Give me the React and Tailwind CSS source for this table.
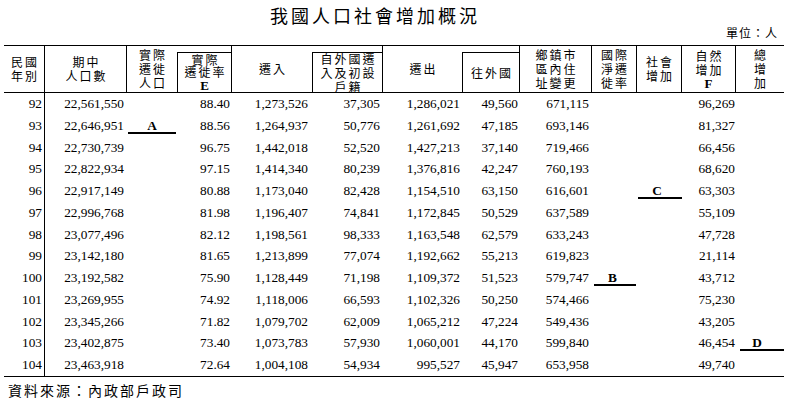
const cjk = "font-['Noto_Sans_CJK_TC','Noto_Sans_CJK_SC',sans-serif]"
const serif = "font-['Liberation_Serif','Times_New_Roman',serif]"

const rows = [
  ['92', '22,561,550', '', '88.40', '1,273,526', '37,305', '1,286,021', '49,560', '671,115', '', '', '96,269', ''],
  ['93', '22,646,951', 'A', '88.56', '1,264,937', '50,776', '1,261,692', '47,185', '693,146', '', '', '81,327', ''],
  ['94', '22,730,739', '', '96.75', '1,442,018', '52,520', '1,427,213', '37,140', '719,466', '', '', '66,456', ''],
  ['95', '22,822,934', '', '97.15', '1,414,340', '80,239', '1,376,816', '42,247', '760,193', '', '', '68,620', ''],
  ['96', '22,917,149', '', '80.88', '1,173,040', '82,428', '1,154,510', '63,150', '616,601', '', 'C', '63,303', ''],
  ['97', '22,996,768', '', '81.98', '1,196,407', '74,841', '1,172,845', '50,529', '637,589', '', '', '55,109', ''],
  ['98', '23,077,496', '', '82.12', '1,198,561', '98,333', '1,163,548', '62,579', '633,243', '', '', '47,728', ''],
  ['99', '23,142,180', '', '81.65', '1,213,899', '77,074', '1,192,662', '55,213', '619,823', '', '', '21,114', ''],
  ['100', '23,192,582', '', '75.90', '1,128,449', '71,198', '1,109,372', '51,523', '579,747', 'B', '', '43,712', ''],
  ['101', '23,269,955', '', '74.92', '1,118,006', '66,593', '1,102,326', '50,250', '574,466', '', '', '75,230', ''],
  ['102', '23,345,266', '', '71.82', '1,079,702', '62,009', '1,065,212', '47,224', '549,436', '', '', '43,205', ''],
  ['103', '23,402,875', '', '73.40', '1,073,783', '57,930', '1,060,001', '44,170', '599,840', '', '', '46,454', 'D'],
  ['104', '23,463,918', '', '72.64', '1,004,108', '54,934', '995,527', '45,947', '653,958', '', '', '49,740', ''],
]

// widths follow the ruled columns of the printed table
const bodyCols = [
  'w-[41px] pr-[2px] text-right border-r border-black',
  'w-[82px] pr-[3px] text-right',
  'w-[50px]',
  'w-[55px] pr-[2px] text-right',
  'w-[80px] pr-[4px] text-right',
  'w-[71px] pr-[3px] text-right',
  'w-[79px] pr-[2px] text-right',
  'w-[58px] pr-[2px] text-right',
  'w-[72px] pr-[3px] text-right',
  'w-[45px]',
  'w-[45px]',
  'w-[54px] pr-[1px] text-right',
  'w-[48px]',
]

// blanks to fill in: letter sits on a rule across the cell
const marks = {
  A: 'ml-[1px] mr-[1px]',
  B: 'ml-[2px] mr-[1px] pr-[5px]',
  C: 'ml-[1px] pr-[6px]',
  D: 'ml-[4px] pr-[10px]',
}

function Lines({ lines, letter, tight }) {
  return (
    <div className="flex flex-col items-center">
      {lines.map(l => (
        <span key={l} className={`pl-[2px] tracking-[2px] ${tight ? 'leading-[12.5px]' : 'leading-[14px]'}`}>{l}</span>
      ))}
      {letter && <span className={`${serif} text-[13px] font-bold leading-[13px]`}>{letter}</span>}
    </div>
  )
}

function HeadCell({ w, border, lines, letter }) {
  return (
    <div className={`${w} h-full flex items-center justify-center ${border ? 'border-r border-black' : ''}`}>
      <Lines lines={lines} letter={letter} />
    </div>
  )
}

function BoxCell({ w, lines, letter }) {
  return (
    <div className={`${w} h-full pt-[6px] border-r border-black`}>
      <div className="h-full flex items-center justify-center border-t border-l border-black">
        <Lines lines={lines} letter={letter} tight={!!letter} />
      </div>
    </div>
  )
}

export default function App() {
  return (
    <div className="w-[788px] h-[411px] bg-white text-black overflow-hidden">
      <div className={`${cjk} pr-[38px] pt-[4px] h-[26px] text-center text-[18px] tracking-[3px] leading-[22px]`}>
        我國人口社會增加概況
      </div>
      <div className={`${cjk} pr-[10px] h-[14px] text-right text-[12px] tracking-[1px] leading-[14px] mb-[5px]`}>
        單位：人
      </div>

      <div className="ml-[4px] w-[780px] border-t border-b border-black">
        <div className={`${cjk} flex h-[47px] text-[12px] border-b border-black`}>
          <HeadCell w="w-[41px]" border lines={['民國', '年別']} />
          <HeadCell w="w-[82px]" border lines={['期中', '人口數']} />
          <HeadCell w="w-[50px]" lines={['實際', '遷徙', '人口']} />
          <BoxCell w="w-[55px]" lines={['實際', '遷徙率']} letter="E" />
          <HeadCell w="w-[80px]" lines={['遷入']} />
          <BoxCell w="w-[71px]" lines={['自外國遷', '入及初設', '戶籍']} />
          <HeadCell w="w-[79px]" lines={['遷出']} />
          <BoxCell w="w-[58px]" lines={['往外國']} />
          <HeadCell w="w-[72px]" border lines={['鄉鎮市', '區內住', '址變更']} />
          <HeadCell w="w-[45px]" border lines={['國際', '淨遷', '徙率']} />
          <HeadCell w="w-[45px]" border lines={['社會', '增加']} />
          <HeadCell w="w-[54px]" border lines={['自然', '增加']} letter="F" />
          <HeadCell w="w-[48px]" lines={['總', '增', '加']} />
        </div>

        <div className={`${serif} text-[13.3px]`}>
          {rows.map(r => (
            <div key={r[0]} className="flex h-[21.75px]">
              {r.map((v, i) =>
                marks[v] ? (
                  <div key={i} className={`${bodyCols[i]} h-full flex items-end`}>
                    <div className={`flex-1 mb-[3px] border-b-2 border-black text-center font-bold leading-[12px] ${marks[v]}`}>
                      {v}
                    </div>
                  </div>
                ) : (
                  <div key={i} className={`${bodyCols[i]} h-full leading-[21.75px] whitespace-nowrap`}>
                    {v}
                  </div>
                )
              )}
            </div>
          ))}
        </div>
      </div>

      <div className={`${cjk} ml-[8px] mt-[3px] text-[14px] tracking-[2px] leading-[20px]`}>
        資料來源：內政部戶政司
      </div>
    </div>
  )
}
